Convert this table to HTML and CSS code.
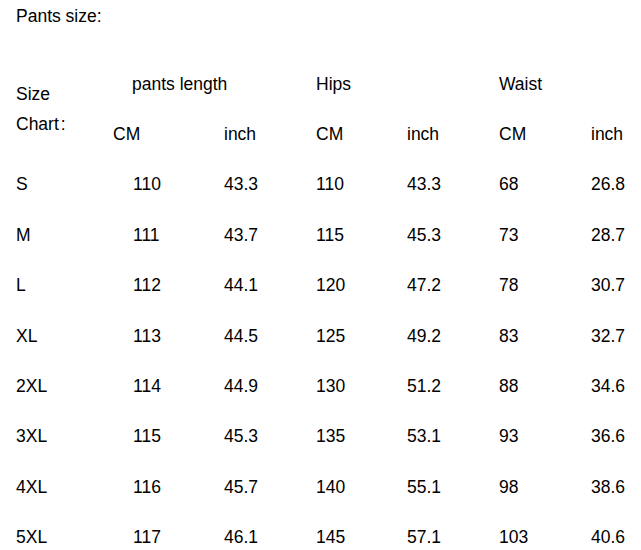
FILE: index.html
```html
<!DOCTYPE html>
<html>
<head>
<meta charset="utf-8">
<link rel="stylesheet" href="styles.css">
</head>
<body>
<div class="page">
  <div class="title">Pants size:</div>
  <div class="chart">
    <div class="label"><span class="line">Size</span><span class="line">Chart<span class="colon">:</span></span></div>
    <div class="group pants">pants length</div>
    <div class="group span2">Hips</div>
    <div class="group span2">Waist</div>

    <div class="cell">CM</div><div class="cell">inch</div><div class="cell">CM</div><div class="cell">inch</div><div class="cell">CM</div><div class="cell">inch</div>

    <div class="cell">S</div><div class="cell pad">110</div><div class="cell">43.3</div><div class="cell">110</div><div class="cell">43.3</div><div class="cell">68</div><div class="cell">26.8</div>
    <div class="cell">M</div><div class="cell pad">111</div><div class="cell">43.7</div><div class="cell">115</div><div class="cell">45.3</div><div class="cell">73</div><div class="cell">28.7</div>
    <div class="cell">L</div><div class="cell pad">112</div><div class="cell">44.1</div><div class="cell">120</div><div class="cell">47.2</div><div class="cell">78</div><div class="cell">30.7</div>
    <div class="cell">XL</div><div class="cell pad">113</div><div class="cell">44.5</div><div class="cell">125</div><div class="cell">49.2</div><div class="cell">83</div><div class="cell">32.7</div>
    <div class="cell">2XL</div><div class="cell pad">114</div><div class="cell">44.9</div><div class="cell">130</div><div class="cell">51.2</div><div class="cell">88</div><div class="cell">34.6</div>
    <div class="cell">3XL</div><div class="cell pad">115</div><div class="cell">45.3</div><div class="cell">135</div><div class="cell">53.1</div><div class="cell">93</div><div class="cell">36.6</div>
    <div class="cell">4XL</div><div class="cell pad">116</div><div class="cell">45.7</div><div class="cell">140</div><div class="cell">55.1</div><div class="cell">98</div><div class="cell">38.6</div>
    <div class="cell">5XL</div><div class="cell pad">117</div><div class="cell">46.1</div><div class="cell">145</div><div class="cell">57.1</div><div class="cell">103</div><div class="cell">40.6</div>
  </div>
</div>
</body>
</html>
```

FILE: styles.css
```css
html, body {
  margin: 0;
  padding: 0;
  background: #fff;
}
body {
  font-family: "Liberation Sans", Arial, sans-serif;
  font-size: 17.5px;
  line-height: 20px;
  color: #000;
}
.page {
  padding: 6px 0 0 16px;
}
.title {
  height: 20px;
  margin-bottom: 33px;
}
.chart {
  display: grid;
  grid-template-columns: 97px 111px 92px 91px 92px 92px 1fr;
  grid-template-rows: 49.8px repeat(9, 50.4px);
  align-items: center;
}
.label {
  grid-row: span 2;
  align-self: start;
  padding-top: 20px;
  display: flex;
  flex-direction: column;
  line-height: 30px;
}
.colon {
  margin-left: 2px;
}
.group {
  white-space: nowrap;
}
.span2 {
  grid-column: span 2;
}
.pants {
  grid-column: span 2;
  padding-left: 19px;
}
.cell {
  white-space: nowrap;
}
.pad {
  padding-left: 20px;
}
```
